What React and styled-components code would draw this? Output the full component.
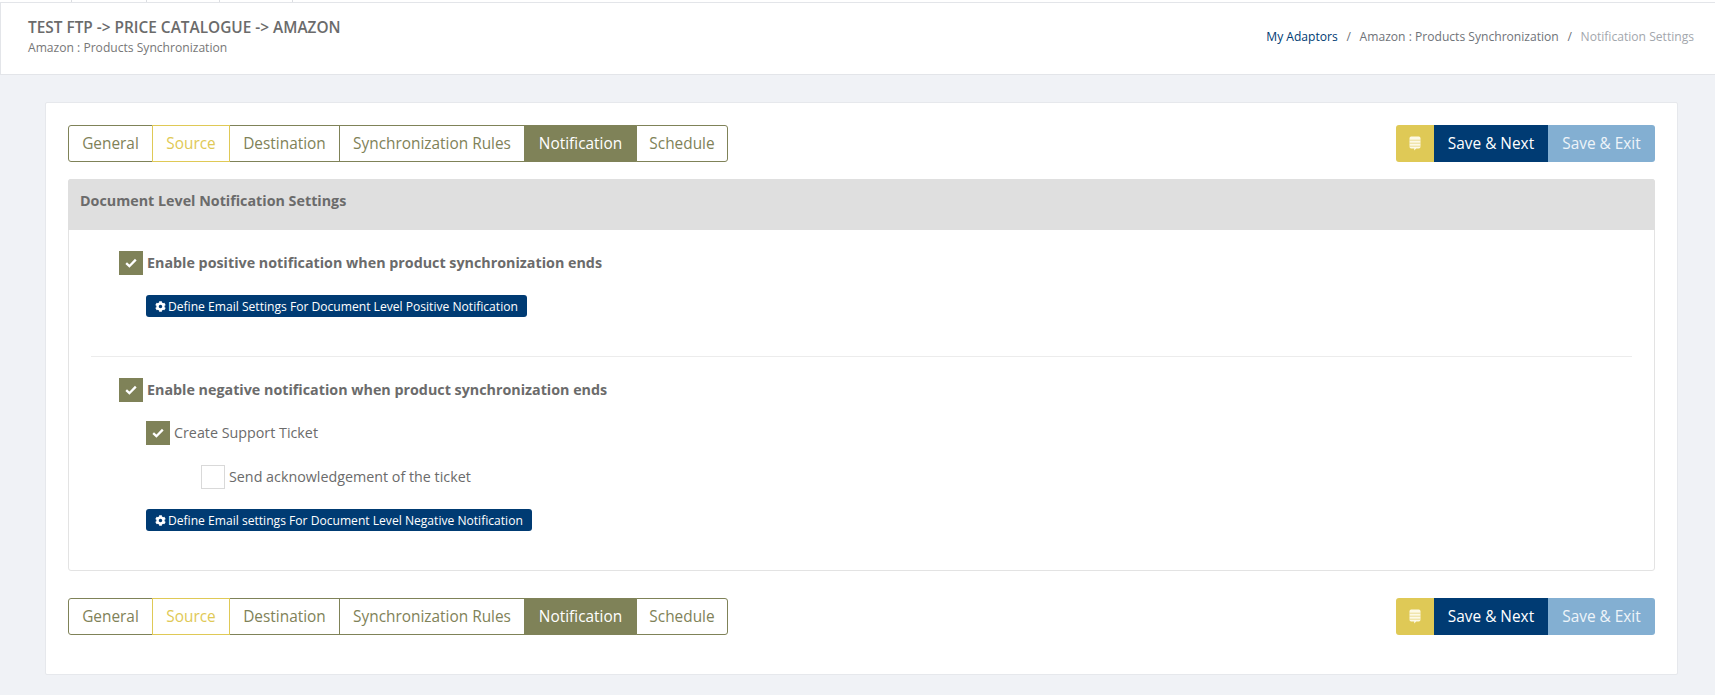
import React from "react";
import styled, { createGlobalStyle } from "styled-components";
import { FaCog } from "react-icons/fa";

const olive = "#7f8258";
const yellow = "#dfc956";
const navy = "#003b73";

const GlobalStyle = createGlobalStyle`
  html, body {
    margin: 0;
    padding: 0;
    height: 100%;
    background: #f0f2f6;
    overflow: hidden;
  }
  * {
    box-sizing: border-box;
  }
`;

const Page = styled.div`
  font-family: "Open Sans", "Liberation Sans", sans-serif;
  color: #6b6b6b;
  height: 695px;
`;

const TopStrip = styled.div`
  height: 3px;
  background: #ffffff;
  border-bottom: 1px solid #e3e5e9;
  display: flex;
`;

const StripTab = styled.span`
  width: ${props => props.$width}px;
  height: 2px;
  border-right: 1px solid #dcdee2;
`;

const Header = styled.header`
  height: 72px;
  background: #ffffff;
  border-bottom: 1px solid #e3e5e9;
  border-left: 1px solid #e3e5e9;
  padding: 0 21px 0 27px;
  display: flex;
  justify-content: space-between;
`;

const TitleBlock = styled.div`
  padding-top: 15px;
`;

const Title = styled.h1`
  margin: 0;
  font-size: 15.4px;
  line-height: 20px;
  font-weight: 600;
  color: #6b6b6b;
`;

const Subtitle = styled.div`
  font-size: 12.1px;
  line-height: 16px;
  margin-top: 2px;
  color: #777777;
`;

const Breadcrumb = styled.nav`
  padding-top: 26px;
  font-size: 12.1px;
  line-height: 16px;
  display: flex;
  height: fit-content;
`;

const Crumb = styled.span`
  color: ${props => props.$color || "#6f7379"};
`;

const CrumbSep = styled.span`
  color: #6f7379;
  margin: 0 8.7px;
`;

const Content = styled.main`
  padding: 27px 37px 0 45px;
`;

const Card = styled.section`
  background: #ffffff;
  border: 1px solid #e6e8ec;
  border-radius: 2px;
  padding: 22px 22px 39px 22px;
`;

const Toolbar = styled.div`
  display: flex;
  justify-content: space-between;
  height: 37px;
  margin-top: ${props => props.$top || 0}px;
`;

const Tabs = styled.div`
  display: flex;
`;

const Tab = styled.button`
  font: inherit;
  font-size: 15.4px;
  height: 37px;
  padding: 0;
  width: ${props => props.$width}px;
  margin-left: -1px;
  position: relative;
  background: ${props => (props.$active ? olive : "#ffffff")};
  color: ${props => (props.$active ? "#ffffff" : props.$muted ? yellow : olive)};
  border: 1px solid ${props => (props.$muted ? yellow : olive)};
  z-index: ${props => (props.$muted ? 1 : 0)};
  &:first-child {
    margin-left: 0;
    border-radius: 3px 0 0 3px;
  }
  &:last-child {
    border-radius: 0 3px 3px 0;
  }
`;

const Actions = styled.div`
  display: flex;
`;

const Action = styled.button`
  font: inherit;
  font-size: 15.4px;
  height: 37px;
  border: 0;
  padding: 0;
  width: ${props => props.$width}px;
  background: ${props => props.$bg};
  color: ${props => props.$color || "#ffffff"};
  display: flex;
  align-items: center;
  justify-content: center;
  &:first-child {
    border-radius: 3px 0 0 3px;
  }
  &:last-child {
    border-radius: 0 3px 3px 0;
  }
`;

const Panel = styled.div`
  margin-top: 17px;
  height: 392px;
  border: 1px solid #e3e3e3;
  border-radius: 3px;
`;

const PanelHead = styled.div`
  height: 51px;
  margin: -1px -1px 0;
  background: #dfdfdf;
  border-radius: 3px 3px 0 0;
  padding: 12px 0 0 12px;
  font-size: 14.3px;
  line-height: 20px;
  font-weight: 700;
  color: #6b6b6b;
`;

const PanelBody = styled.div`
  padding: 21px 22px 0;
`;

const Section = styled.div`
  padding-left: 28px;
`;

const Row = styled.label`
  display: flex;
  align-items: center;
  gap: 4px;
  height: 24px;
  margin-top: ${props => props.$top || 0}px;
  margin-left: ${props => props.$indent || 0}px;
  font-size: 14.3px;
  font-weight: ${props => (props.$strong ? 700 : 400)};
  color: #6b6b6b;
`;

const RowText = styled.span`
  margin-top: -2px;
`;

const Box = styled.span`
  width: 24px;
  height: 24px;
  flex: none;
  display: flex;
  align-items: center;
  justify-content: center;
  background: ${props => (props.$checked ? olive : "#ffffff")};
  border: ${props => (props.$checked ? "0" : "1px solid #d9d9d9")};
`;

const DefineButton = styled.button`
  display: flex;
  align-items: center;
  gap: 2px;
  height: 22px;
  width: ${props => props.$width}px;
  margin: ${props => props.$top}px 0 0 27px;
  padding: 0 0 0 9px;
  border: 0;
  border-radius: 3px;
  background: ${navy};
  color: #ffffff;
  font: inherit;
  font-size: 12.1px;
  white-space: nowrap;
`;

const Divider = styled.hr`
  margin: 39px 0 21px;
  border: 0;
  border-top: 1px solid #ececec;
`;

const tabs = [
  { label: "General", width: 85 },
  { label: "Source", width: 78, muted: true },
  { label: "Destination", width: 111 },
  { label: "Synchronization Rules", width: 186 },
  { label: "Notification", width: 113, active: true },
  { label: "Schedule", width: 92 }
];

function Check() {
  return (
    <svg width="12" height="10" viewBox="0 0 12 10">
      <path d="M1.2 5.2 4.4 8.2 10.8 1.6" fill="none" stroke="#ffffff" strokeWidth="2.3" />
    </svg>
  );
}

function NoteIcon() {
  return (
    <svg width="12" height="15" viewBox="0 0 12 15">
      <path
        d="M2.2.5h7.6a1.7 1.7 0 0 1 1.7 1.7v8.6a1.7 1.7 0 0 1-1.7 1.7H7.2L5.2 14.5v-2H2.2A1.7 1.7 0 0 1 .5 10.8V2.2A1.7 1.7 0 0 1 2.2.5Z"
        fill="#fdf9e6"
      />
      <path d="M.5 4.2h11M.5 7.2h11M.5 10.2h11" stroke={yellow} strokeWidth=".7" opacity=".8" />
    </svg>
  );
}

function NavBar({ top }) {
  return (
    <Toolbar $top={top}>
      <Tabs>
        {tabs.map(tab => (
          <Tab
            key={tab.label}
            $width={tab.width}
            $active={tab.active}
            $muted={tab.muted}
          >
            {tab.label}
          </Tab>
        ))}
      </Tabs>
      <Actions>
        <Action $width={38} $bg={yellow} aria-label="Notes">
          <NoteIcon />
        </Action>
        <Action $width={114} $bg={navy}>Save &amp; Next</Action>
        <Action $width={107} $bg="#83afd2" $color="#eef4f9">Save &amp; Exit</Action>
      </Actions>
    </Toolbar>
  );
}

function CheckRow({ checked, strong, indent, top, children }) {
  return (
    <Row $strong={strong} $indent={indent} $top={top}>
      <Box $checked={checked}>{checked && <Check />}</Box>
      <RowText>{children}</RowText>
    </Row>
  );
}

function App() {
  return (
    <Page>
      <GlobalStyle />
      <TopStrip>
        <StripTab $width={72} />
        <StripTab $width={75} />
        <StripTab $width={73} />
        <StripTab $width={73} />
      </TopStrip>
      <Header>
        <TitleBlock>
          <Title>TEST FTP -&gt; PRICE CATALOGUE -&gt; AMAZON</Title>
          <Subtitle>Amazon : Products Synchronization</Subtitle>
        </TitleBlock>
        <Breadcrumb>
          <Crumb $color={navy}>My Adaptors</Crumb>
          <CrumbSep>/</CrumbSep>
          <Crumb>Amazon : Products Synchronization</Crumb>
          <CrumbSep>/</CrumbSep>
          <Crumb $color="#a3a7ad">Notification Settings</Crumb>
        </Breadcrumb>
      </Header>
      <Content>
        <Card>
          <NavBar />
          <Panel>
            <PanelHead>Document Level Notification Settings</PanelHead>
            <PanelBody>
              <Section>
                <CheckRow checked strong>
                  Enable positive notification when product synchronization ends
                </CheckRow>
                <DefineButton $width={381} $top={20}>
                  <FaCog size={11} />
                  Define Email Settings For Document Level Positive Notification
                </DefineButton>
              </Section>
              <Divider />
              <Section>
                <CheckRow checked strong>
                  Enable negative notification when product synchronization ends
                </CheckRow>
                <CheckRow checked indent={27} top={19}>
                  Create Support Ticket
                </CheckRow>
                <CheckRow indent={82} top={20}>
                  Send acknowledgement of the ticket
                </CheckRow>
                <DefineButton $width={386} $top={20}>
                  <FaCog size={11} />
                  Define Email settings For Document Level Negative Notification
                </DefineButton>
              </Section>
            </PanelBody>
          </Panel>
          <NavBar top={27} />
        </Card>
      </Content>
    </Page>
  );
}

export default App;
